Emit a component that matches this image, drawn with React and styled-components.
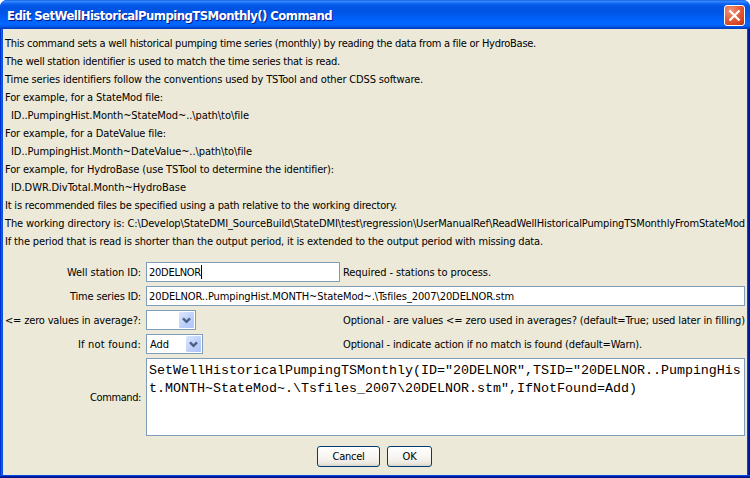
import React, { useLayoutEffect, useRef, useState } from "react";
import styled, { createGlobalStyle, css } from "styled-components";

const GlobalStyle = createGlobalStyle`
  * { box-sizing: border-box; }
  body { margin: 0; background: #fff; overflow: hidden; }
`;

const uiFont = css`
  font-family: "DejaVu Sans Condensed", "DejaVu Sans", sans-serif;
  font-stretch: condensed;
  font-size: 11px;
  line-height: 18px;
  color: #000;
`;

const Window = styled.div`
  ${uiFont}
  width: 750px;
  height: 478px;
  display: flex;
  flex-direction: column;
  border-radius: 7px 7px 0 0;
  overflow: hidden;
  background: #0046e0;
`;

const TitleBar = styled.header`
  flex: none;
  height: 29px;
  display: flex;
  align-items: flex-start;
  justify-content: space-between;
  padding: 5px 5px 0 7px;
  background: linear-gradient(
    to bottom,
    #0a50d8 0, #3a8cff 1px, #2a80fc 2px, #0a5ff0 4px, #0054e3 7px,
    #0055e5 13px, #0060fa 19px, #0266ff 24px, #0060f4 26px, #0043c8 28px, #0038b8 29px
  );
`;

const Title = styled.h1`
  margin: 1px 0 0;
  font-family: "DejaVu Sans Condensed", "DejaVu Sans", sans-serif;
  font-stretch: condensed;
  font-size: 13px;
  font-weight: 700;
  line-height: 20px;
  color: #fff;
  text-shadow: 1px 1px 0 #0a1883;
`;

const CloseButton = styled.button`
  width: 21px;
  height: 21px;
  padding: 0;
  border: 1px solid #fff;
  border-radius: 3px;
  background: radial-gradient(circle at 30% 25%, #f0967c 0, #e4603e 45%, #d64420 75%, #b8300e 100%);
  display: flex;
  align-items: center;
  justify-content: center;
`;

const Frame = styled.div`
  flex: 1;
  display: flex;
  padding: 0 3px 3px;
  background:
    linear-gradient(#0046e0 0 1px, #001ea0 1px 2px, #00138c 2px) bottom / 100% 3px no-repeat,
    linear-gradient(to right, #0030d0 0 1px, #0a5cf0 1px 2px, #0855dd 2px) left / 3px 100% no-repeat,
    linear-gradient(to right, #0046e0 0 1px, #001ea0 1px 2px, #00138c 2px) right / 3px 100% no-repeat;
`;

const Content = styled.main`
  flex: 1;
  display: flex;
  flex-direction: column;
  padding: 6px 2px 0;
  background: #ece9d8;
`;

const Notes = styled.div`
  display: flex;
  flex-direction: column;
  height: 227px;
`;

const NoteLine = styled.div`
  height: 18px;
  padding-left: ${(p) => (p.$indent ? 6 : 0)}px;
`;

const Form = styled.div`
  display: grid;
  grid-template-columns: 136px 194px 1fr;
  column-gap: 5px;
  grid-template-rows: 20px 20px 20px 20px 78px;
  row-gap: 4px;
`;

const Label = styled.label`
  display: flex;
  align-items: center;
  justify-content: flex-end;
  padding-top: 2px;
`;

const Hint = styled.div`
  display: flex;
  align-items: center;
  margin-left: -2px;
  padding-top: 2px;
`;

const Field = styled.div`
  grid-column: ${(p) => (p.$wide ? "2 / 4" : "2")};
  display: flex;
  align-items: flex-start;
  padding: 1px 0 0 2px;
  border: 1px solid #7f9db9;
  background: #fff;
`;

const Caret = styled.span`
  width: 1px;
  height: 14px;
  margin-top: 1px;
  background: #000;
`;

const Select = styled.div`
  width: ${(p) => p.$width}px;
  display: flex;
  align-items: flex-start;
  justify-content: space-between;
  padding: 1px 1px 0 3px;
  border: 1px solid #7f9db9;
  background: #fff;
`;

const DropButton = styled.span`
  width: 15px;
  height: 16px;
  margin-left: auto;
  border-radius: 1px;
  background: linear-gradient(135deg, #dce7fe, #bccffb 60%, #adc3f6);
  display: flex;
  align-items: center;
  justify-content: center;
`;

const CommandBox = styled.div`
  grid-column: 2 / 4;
  padding: 3px 2px;
  border: 1px solid #7f9db9;
  background: #fff;
  font-family: "Liberation Mono", monospace;
  font-size: 13.33px;
  line-height: 18px;
  white-space: pre;
`;

const Buttons = styled.div`
  display: flex;
  justify-content: center;
  gap: 7px;
  margin-top: 10px;
  padding-right: 1px;
`;

const Button = styled.button`
  ${uiFont}
  width: ${(p) => p.$width}px;
  height: 21px;
  padding: 0;
  border: 1px solid #003c74;
  border-radius: 3px;
  background: linear-gradient(#fff, #f5f4ef 60%, #ebe9e0 85%, #d8d2c6);
  line-height: 18px;
`;

const Measured = styled.span`
  display: inline-block;
  white-space: pre;
`;

/* Text tracked so that it spans a given advance width. */
function Text({ w, children }) {
  const ref = useRef(null);
  const [tracking, setTracking] = useState(0);
  useLayoutEffect(() => {
    const natural = ref.current.getBoundingClientRect().width;
    setTracking((w - natural) / children.length);
  }, [w, children]);
  return (
    <Measured ref={ref} style={{ letterSpacing: tracking }}>
      {children}
    </Measured>
  );
}

const Chevron = () => (
  <svg width="9" height="7" viewBox="0 0 9 7">
    <path d="M1 1.3 4.5 4.8 8 1.3" fill="none" stroke="#4d6185" strokeWidth="2.4" />
  </svg>
);

const notes = [
  ["This command sets a well historical pumping time series (monthly) by reading the data from a file or HydroBase.", 531],
  ["The well station identifier is used to match the time series that is read.", 335],
  ["Time series identifiers follow the conventions used by TSTool and other CDSS software.", 418],
  ["For example, for a StateMod file:", 158],
  ["ID..PumpingHist.Month~StateMod~..\\path\\to\\file", 238, true],
  ["For example, for a DateValue file:", 161],
  ["ID..PumpingHist.Month~DateValue~..\\path\\to\\file", 241, true],
  ["For example, for HydroBase (use TSTool to determine the identifier):", 329],
  ["ID.DWR.DivTotal.Month~HydroBase", 175, true],
  ["It is recommended files be specified using a path relative to the working directory.", 392],
  ["The working directory is: C:\\Develop\\StateDMI_SourceBuild\\StateDMI\\test\\regression\\UserManualRef\\ReadWellHistoricalPumpingTSMonthlyFromStateMod", 740],
  ["If the period that is read is shorter than the output period, it is extended to the output period with missing data.", 538],
];

const command =
  'SetWellHistoricalPumpingTSMonthly(ID="20DELNOR",TSID="20DELNOR..PumpingHis\n' +
  't.MONTH~StateMod~.\\Tsfiles_2007\\20DELNOR.stm",IfNotFound=Add)';

export default function App() {
  return (
    <>
      <GlobalStyle />
      <Window>
        <TitleBar>
          <Title><Text w={325}>Edit SetWellHistoricalPumpingTSMonthly() Command</Text></Title>
          <CloseButton aria-label="Close">
            <svg width="13" height="13" viewBox="0 0 13 13">
              <path d="M1.5 1.5 11.5 11.5M11.5 1.5 1.5 11.5" stroke="#fff" strokeWidth="2.2" />
            </svg>
          </CloseButton>
        </TitleBar>
        <Frame>
          <Content>
            <Notes>
              {notes.map(([text, w, indent]) => (
                <NoteLine key={text} $indent={indent}><Text w={w}>{text}</Text></NoteLine>
              ))}
            </Notes>
            <Form>
              <Label><Text w={74}>Well station ID:</Text></Label>
              <Field><Text w={52}>20DELNOR</Text><Caret /></Field>
              <Hint><Text w={148}>Required - stations to process.</Text></Hint>

              <Label><Text w={71}>Time series ID:</Text></Label>
              <Field $wide><Text w={365}>{"20DELNOR..PumpingHist.MONTH~StateMod~.\\Tsfiles_2007\\20DELNOR.stm"}</Text></Field>

              <Label><Text w={136}>{"<= zero values in average?:"}</Text></Label>
              <Select $width={50}><DropButton><Chevron /></DropButton></Select>
              <Hint><Text w={402}>{"Optional - are values <= zero used in averages? (default=True; used later in filling)"}</Text></Hint>

              <Label><Text w={63}>If not found:</Text></Label>
              <Select $width={57}><Text w={19}>Add</Text><DropButton><Chevron /></DropButton></Select>
              <Hint><Text w={299}>Optional - indicate action if no match is found (default=Warn).</Text></Hint>

              <Label><Text w={51}>Command:</Text></Label>
              <CommandBox>{command}</CommandBox>
            </Form>
            <Buttons>
              <Button $width={63}><Text w={32}>Cancel</Text></Button>
              <Button $width={45}><Text w={14}>OK</Text></Button>
            </Buttons>
          </Content>
        </Frame>
      </Window>
    </>
  );
}
